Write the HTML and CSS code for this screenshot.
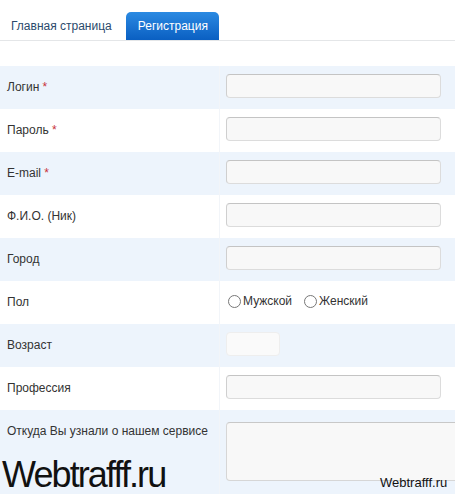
FILE: index.html
```html
<!DOCTYPE html>
<html lang="ru">
<head>
<meta charset="utf-8">
<link rel="stylesheet" href="styles.css">
</head>
<body>
<div class="page">
  <div class="tabs">
    <div class="tab">Главная страница</div>
    <div class="tab active">Регистрация</div>
  </div>
  <div class="form">
    <div class="row alt">
      <div class="label">Логин <span class="req">*</span></div>
      <div class="field"><div class="input"></div></div>
    </div>
    <div class="row">
      <div class="label">Пароль <span class="req">*</span></div>
      <div class="field"><div class="input"></div></div>
    </div>
    <div class="row alt">
      <div class="label">E-mail <span class="req">*</span></div>
      <div class="field"><div class="input"></div></div>
    </div>
    <div class="row">
      <div class="label">Ф.И.О. (Ник)</div>
      <div class="field"><div class="input"></div></div>
    </div>
    <div class="row alt">
      <div class="label">Город</div>
      <div class="field"><div class="input"></div></div>
    </div>
    <div class="row">
      <div class="label">Пол</div>
      <div class="field radios">
        <span class="radio"><span class="circle"></span>Мужской</span>
        <span class="radio"><span class="circle"></span>Женский</span>
      </div>
    </div>
    <div class="row alt">
      <div class="label">Возраст</div>
      <div class="field"><div class="input short"></div></div>
    </div>
    <div class="row">
      <div class="label">Профессия</div>
      <div class="field"><div class="input"></div></div>
    </div>
    <div class="row alt last">
      <div class="label">Откуда Вы узнали о нашем сервисе</div>
      <div class="field"><div class="textarea"></div></div>
    </div>
  </div>
  <div class="wm-big">Webtrafff.ru</div>
  <div class="wm-small">Webtrafff.ru</div>
</div>
</body>
</html>
```
FILE: styles.css
```css
html, body {
  margin: 0;
  padding: 0;
  background: #fff;
}
.page {
  position: relative;
  width: 455px;
  height: 494px;
  overflow: hidden;
  font-family: "Liberation Sans", Arial, sans-serif;
  color: #333;
}
.tabs {
  display: flex;
  align-items: flex-end;
  height: 28px;
  padding-top: 12px;
  border-bottom: 1px solid #e4e6e8;
}
.tab {
  height: 28px;
  line-height: 28px;
  padding: 0 11px 0 11px;
  font-size: 12px;
  color: #2b4a6c;
}
.tab.active {
  margin-left: 3px;
  padding: 0 11px 0 12px;
  color: #fff;
  border-radius: 5px 5px 0 0;
  background: linear-gradient(#2b8ae2, #0a5fc2);
}
.form {
  margin-top: 25px;
}
.row {
  display: flex;
  height: 43px;
  background: #fff;
}
.row.alt {
  background: #edf4fc;
}
.row.last {
  height: 84px;
}
.label {
  box-sizing: border-box;
  flex: 0 0 220px;
  width: 220px;
  padding: 14px 0 0 7px;
  font-size: 12px;
  line-height: 15px;
  border-right: 1px solid #f2f5f9;
}
.req {
  color: #c8323a;
}
.field {
  flex: 1 1 auto;
  min-width: 0;
  padding: 8px 0 0 6px;
}
.input {
  box-sizing: border-box;
  width: 215px;
  height: 24px;
  background: #f8f8f8;
  border: 1px solid #dcdcdc;
  border-top-color: #c4c4c4;
  border-left-color: #cfcfcf;
  border-radius: 4px;
}
.input.short {
  width: 54px;
  border-color: #eeeeee;
  background: #fafafa;
}
.textarea {
  box-sizing: border-box;
  width: 240px;
  height: 59px;
  margin-top: 4px;
  background: #f8f8f8;
  border: 1px solid #d6d6d6;
  border-top-color: #c8c8c8;
  border-radius: 4px;
}
.radios {
  display: flex;
  align-items: flex-start;
  padding-top: 13px;
  padding-left: 8px;
  font-size: 12px;
  line-height: 14px;
  gap: 12px;
}
.radio {
  display: flex;
  align-items: center;
  gap: 2px;
}
.circle {
  box-sizing: border-box;
  width: 13px;
  height: 13px;
  border: 1px solid #777;
  border-radius: 50%;
  background: #fff;
}
.wm-big {
  position: absolute;
  left: 2px;
  top: 455px;
  font-size: 36px;
  line-height: 40px;
  letter-spacing: -1.9px;
  color: #111;
}
.wm-small {
  position: absolute;
  left: 380px;
  top: 475px;
  font-size: 13px;
  line-height: 16px;
  color: #111;
}
```
